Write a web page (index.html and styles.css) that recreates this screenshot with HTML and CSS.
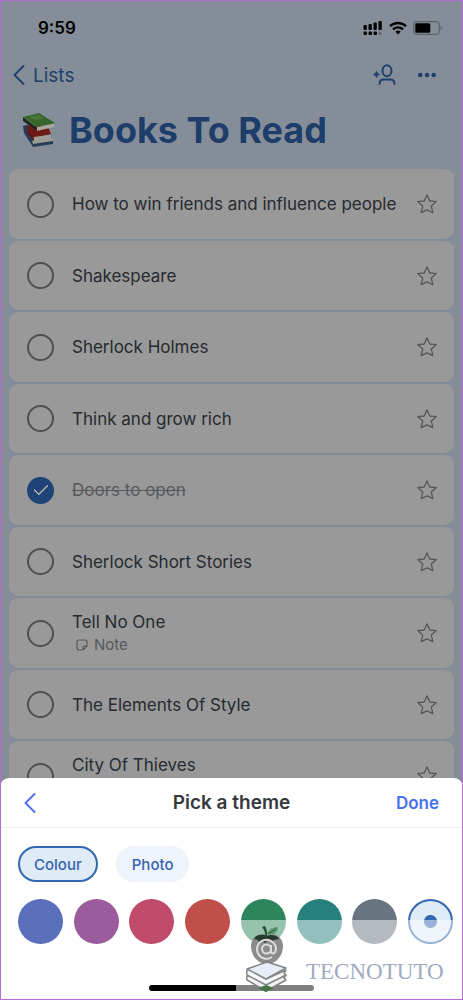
FILE: index.html
```html
<!DOCTYPE html>
<html lang="en">
<head>
<meta charset="utf-8">
<meta name="viewport" content="width=device-width, initial-scale=1">
<title>Books To Read</title>
<link rel="stylesheet" href="styles.css">
</head>
<body>
<svg class="defs" aria-hidden="true">
  <symbol id="star" viewBox="0 0 22 22"><path d="M11 1.800 13.700 8l6.600.6-5 4.500 1.500 6.500-5.800-2.700-5.800 2.700 1.500-6.500-5-4.500L8.300 8Z" fill="none" stroke="currentColor" stroke-width="1.300" stroke-linejoin="round"/></symbol>
  <symbol id="back" viewBox="0 0 12 20"><path d="M10.500 1 1.500 10l9 9" fill="none" stroke="currentColor" stroke-width="1.900" stroke-linecap="round" stroke-linejoin="round"/></symbol>
</svg>
<div class="screen">
  <header class="status">
    <span class="time">9:59</span>
    <span class="signals">
      <svg width="20" height="16" viewBox="0 0 20 16" aria-hidden="true"><g fill="#000"><rect x=".5" y="5" width="3.300" height="5" rx="1"/><rect x="5.500" y="4" width="3.300" height="6" rx="1"/><rect x="10.500" y="2.500" width="3.300" height="7.500" rx="1"/><rect x="15.500" y="1" width="3.300" height="9" rx="1"/><rect x=".5" y="11.500" width="3.500" height="3.500" rx="1.200"/><rect x="5.500" y="11.500" width="3.500" height="3.500" rx="1.200"/><rect x="10.500" y="11.500" width="3.500" height="3.500" rx="1.200"/></g><rect x="15.500" y="11.500" width="3.300" height="3.500" rx="1.200" fill="#686e75"/></svg>
      <svg width="18" height="14" viewBox="0 0 18 14" aria-hidden="true"><g fill="none" stroke="#000" stroke-width="2.300"><path d="M1 5.200a11.600 11.600 0 0 1 16 0"/><path d="M4 8.400a7.300 7.300 0 0 1 10 0"/></g><path d="M6.300 10.800a4 4 0 0 1 5.400 0L9 13.500Z"/></svg>
      <svg width="30" height="14" viewBox="0 0 30 14" aria-hidden="true"><rect x=".7" y=".7" width="25.600" height="12.600" rx="3.500" fill="none" stroke="#5c6268" stroke-width="1.200"/><rect x="2.300" y="2.300" width="15" height="9.400" rx="1.500"/><path d="M27.700 4.800c2 .8 2 3.600 0 4.400Z" fill="#5c6268"/></svg>
    </span>
  </header>
  <nav class="nav">
    <a class="lists" href="#"><svg width="12" height="20"><use href="#back"/></svg>Lists</a>
    <span class="tools">
      <button aria-label="Share list"><svg width="24" height="22" viewBox="0 0 24 22"><g fill="none" stroke="currentColor" stroke-width="2" stroke-linecap="round"><ellipse cx="14" cy="6.700" rx="4.500" ry="5.500"/><path d="M6.500 20c0-3 2-4.400 4.500-4.400h6c2.500 0 4.500 1.400 4.500 4.400M1.300 10.500h4.400M3.500 8.300v4.400"/></g></svg></button>
      <button aria-label="More options"><svg width="18" height="6" viewBox="0 0 18 6" fill="currentColor"><circle cx="2.300" cy="3" r="2.300"/><circle cx="9" cy="3" r="2.300"/><circle cx="15.700" cy="3" r="2.300"/></svg></button>
    </span>
  </nav>
  <h1 class="title">
    <svg width="34" height="36" viewBox="0 0 34 36" aria-hidden="true"><path d="M1 14 5 13 12 30 31 28v4L11 35 2 21Z" fill="#263b57"/><path d="m10 29 20-3 1 3-20 3Z" fill="#9b9b95"/><path d="M5 13 26 15l3 7-18 4-5-5Z" fill="#6e1a16"/><path d="m11 25 18-2v3l-18 3Z" fill="#a19d96"/><path d="M5 17 12 26v3l-6-7Z" fill="#5b1714"/><path d="M1 5 14 15l1 4L1 9Z" fill="#20261f"/><path d="m15 15 17-3v3l-17 4Z" fill="#aaa79e"/><path d="M1 5 17 1l16 10-18 4Z" fill="#39652d"/><path d="m7 5 10-2 5 3-10 2Z" fill="#477638"/></svg>
    <span>Books To Read</span>
  </h1>
  <ul class="tasks">
    <li><label><input type="checkbox"><span>How to win friends and influence people</span></label><button class="star" aria-label="Star"><svg><use href="#star"/></svg></button></li>
    <li><label><input type="checkbox"><span>Shakespeare</span></label><button class="star" aria-label="Star"><svg><use href="#star"/></svg></button></li>
    <li><label><input type="checkbox"><span>Sherlock Holmes</span></label><button class="star" aria-label="Star"><svg><use href="#star"/></svg></button></li>
    <li><label><input type="checkbox"><span>Think and grow rich</span></label><button class="star" aria-label="Star"><svg><use href="#star"/></svg></button></li>
    <li><label><input type="checkbox" checked><span class="done-task">Doors to open</span></label><button class="star" aria-label="Star"><svg><use href="#star"/></svg></button></li>
    <li><label><input type="checkbox"><span>Sherlock Short Stories</span></label><button class="star" aria-label="Star"><svg><use href="#star"/></svg></button></li>
    <li><label><input type="checkbox"><span>Tell No One<small><svg width="12" height="12" viewBox="0 0 12 12"><path d="M3 1h6q2 0 2 2v4L7 11H3q-2 0-2-2V3q0-2 2-2Zm8 6H8.500Q7 7 7 8.500V11" fill="none" stroke="currentColor" stroke-width="1.200"/></svg>Note</small></span></label><button class="star" aria-label="Star"><svg><use href="#star"/></svg></button></li>
    <li><label><input type="checkbox"><span>The Elements Of Style</span></label><button class="star" aria-label="Star"><svg><use href="#star"/></svg></button></li>
    <li><label class="with-note"><input type="checkbox"><span>City Of Thieves</span></label><button class="star" aria-label="Star"><svg><use href="#star"/></svg></button></li>
  </ul>
</div>
<section class="sheet" aria-labelledby="sheet-title">
  <div class="sheet-head">
    <button class="sheet-back" aria-label="Back"><svg width="12" height="20"><use href="#back"/></svg></button>
    <h2 id="sheet-title">Pick a theme</h2>
    <button class="finish">Done</button>
  </div>
  <div class="tabs"><button class="tab selected">Colour</button><button class="tab">Photo</button></div>
  <div class="swatches">
    <button class="indigo" aria-label="Indigo"></button>
    <button class="purple" aria-label="Purple"></button>
    <button class="pink" aria-label="Pink"></button>
    <button class="red" aria-label="Red"></button>
    <button class="green" aria-label="Green"></button>
    <button class="teal" aria-label="Teal"></button>
    <button class="grey" aria-label="Grey"></button>
    <button class="light" aria-label="Light blue, selected"></button>
  </div>
  <div class="home"></div>
</section>
<div class="brand">
  <svg width="44" height="68" viewBox="0 0 44 68" aria-hidden="true">
    <path d="M23 9c8-3 16 2 16 11 0 10-7 18-16 18S7 30 7 20c0-9 8-14 16-11Z" fill="#8b8b8b"/>
    <path d="M10 13c2-5 9-5 13-3 4-2 10-1 12 3-3 1-6 0-7 3l-4-2-3 3-3-3-3 2q-1-3-5-3Z" fill="#26392e"/>
    <path d="M21 11q1-5-3-10l3-1q3 6 2 11Z" fill="#284e35"/><path d="M24 8c0-5 5-7 10-7 0 5-4 9-10 7Z" fill="#5f9a70"/><path d="m24 8 8-5" stroke="#28583a"/>
    <path d="M27 19v7c1 3 5 1 5-3a9.500 9.500 0 1 0-4 8M27 23a4.500 4.500 0 1 1-9 0 4.500 4.500 0 0 1 9 0" fill="none" stroke="#dedede" stroke-width="2"/>
    <g stroke="#858585" stroke-width="1.500" stroke-linejoin="round"><path d="m3 54 19 11 20-11-2-2 2-3L22 58 4 49q-2 2-1 5Z" fill="#f2f3f3"/><path d="m3 49 19 10 20-10-2-2 2-3L22 53 4 43q-2 2-1 6Z" fill="#f5f7fa"/><path d="m3 43 20-7 19 6-20 11Z" fill="#e8edfa"/></g>
    <path d="m14 62 8-3 8 3-8 4Z" fill="#497448"/>
  </svg>
  <span>TECNOTUTO</span>
</div>
</body>
</html>
```
FILE: styles.css
```css
* { box-sizing: border-box; }
body {
  margin: 0;
  height: 100vh;
  overflow: hidden;
  position: relative;
  background: #858e98;
  color: #262a2e;
  font-family: Inter, "Liberation Sans", sans-serif;
}
body::after {
  content: "";
  position: absolute;
  inset: 0;
  border: 1px solid #b56cda;
  pointer-events: none;
}
button { border: 0; padding: 0; background: none; color: inherit; font: inherit; }
svg { display: block; flex: none; }
.defs { position: absolute; width: 0; height: 0; }
.status { display: flex; justify-content: space-between; align-items: center; height: 56px; padding: 0 20px 0 38px; color: #000; }
.time { font-size: 17px; font-weight: 600; }
.signals { display: flex; align-items: center; gap: 6px; }
.nav { display: flex; align-items: center; justify-content: space-between; height: 38px; padding: 0 27px 0 13px; color: #1e406f; }
.lists { display: flex; align-items: center; gap: 8px; color: inherit; text-decoration: none; font-size: 19px; }
.tools { display: flex; align-items: center; gap: 21px; }
.title { display: flex; align-items: center; gap: 13px; height: 75px; margin: 0; padding: 0 22px 4px; color: #1d3d6a; font-size: 36px; font-weight: 700; white-space: nowrap; }
.tasks { display: flex; flex-direction: column; gap: 2px; margin: 0; padding: 0 9px; list-style: none; }
.tasks li { display: flex; align-items: center; flex: none; height: 69px; padding: 0 16px 0 18px; border-radius: 9px; background: #999; box-shadow: 0 1px 1px #7d8b9d; }
.tasks li:nth-child(odd) { height: 70px; }
.tasks label { display: flex; align-items: center; gap: 18px; flex: 1; font-size: 17px; line-height: 24px; white-space: nowrap; }
.with-note span { padding-bottom: 22px; }
.tasks input { appearance: none; flex: none; width: 27px; height: 27px; margin: 0; border: 2px solid #4d4f51; border-radius: 50%; }
.tasks input:checked { border: 0; background: #1d4377; display: grid; place-items: center; }
.tasks input:checked::after { content: ""; width: 12px; height: 6px; margin-bottom: 4px; border: solid #aaa; border-width: 0 0 2px 2px; border-radius: 1px; transform: rotate(-45deg); }
.done-task { color: #56595c; text-decoration: line-through; }
.tasks small { display: flex; align-items: center; gap: 6px; padding-left: 4px; color: #55585b; font-size: 15px; line-height: 22px; }
.star { color: #54575a; }
.star svg { width: 22px; height: 22px; }
.sheet { position: absolute; left: 0; right: 0; bottom: 0; height: 222px; background: #fff; border-radius: 9px 9px 0 0; }
.sheet-head { display: grid; grid-template-columns: 80px 1fr 80px; align-items: center; height: 50px; padding: 0 24px; border-bottom: 1px solid #f0f1f3; }
.sheet-head h2 { margin: 0; text-align: center; color: #34383c; font-size: 19px; font-weight: 600; }
.sheet-back, .finish { color: #4a70ec; }
.finish { justify-self: end; font-size: 17px; font-weight: 600; }
.tabs { display: flex; gap: 18px; padding: 18px 18px 17px; }
.tab { height: 36px; padding: 0 16px; border-radius: 18px; background: #eff4fc; color: #3564b2; font-size: 15px; font-weight: 500; }
.tab.selected { background: #dfebf7; border: 2px solid #3367b3; padding: 0 14px; }
.swatches { display: flex; justify-content: space-between; padding: 0 10px 0 18px; }
.swatches button { width: 45px; height: 45px; border-radius: 50%; }
.indigo { background: #5b70bd; }
.purple { background: #9c5b9c; }
.pink { background: #c04b6b; }
.red { background: #c14f49; }
.green { background: #2d855c; }
.teal { background: #26817c; }
.grey { background: #687480; }
.swatches .light { border: 2px solid #3267b1; background: radial-gradient(circle, #3267b1 6px, #dfebf7 7px); }
.home { width: 165px; height: 6px; margin: 41px auto 0; border-radius: 3px; background: #000; }
.brand { position: absolute; right: 0; bottom: 0; width: 227px; height: 80px; display: flex; align-items: center; gap: 18px; padding: 0 0 0 8px; background: rgb(255 255 255 / 50%); color: #a0aac2; font: 23px "Liberation Serif", serif; }
.brand span { padding-top: 24px; }
```
